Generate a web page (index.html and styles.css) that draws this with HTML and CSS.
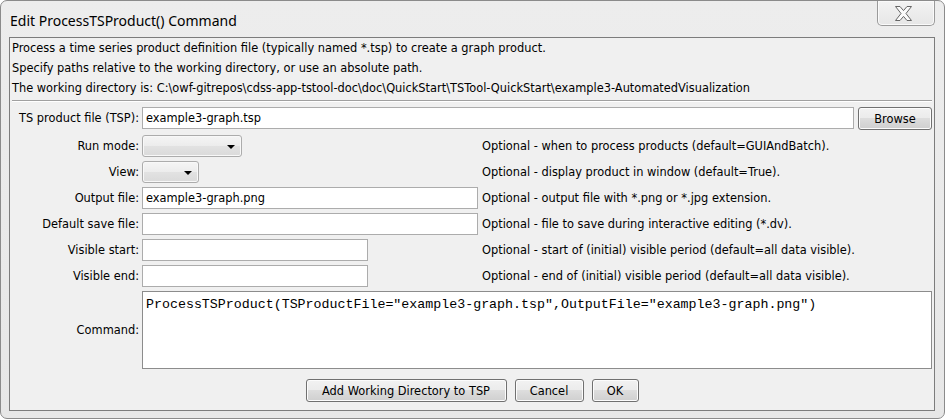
FILE: index.html
```html
<!DOCTYPE html>
<html>
<head>
<meta charset="utf-8">
<title>Edit ProcessTSProduct() Command</title>
<link rel="stylesheet" href="styles.css">
</head>
<body>
<div class="window">
  <div class="titlebar">
    <span class="title">Edit ProcessTSProduct() Command</span>
    <div class="close">
      <svg width="17" height="15" viewBox="0 0 17 15"><polygon points="0.5,0.5 5,0.5 8.5,4.6 12,0.5 16.5,0.5 11,7.5 16.5,14.5 12,14.5 8.5,10.4 5,14.5 0.5,14.5 6,7.5" fill="#fafafa" stroke="#666666" stroke-width="1" stroke-linejoin="round"/></svg>
    </div>
  </div>
  <div class="panel">
    <div class="desc">
      <p>Process a time series product definition file (typically named *.tsp) to create a graph product.</p>
      <p>Specify paths relative to the working directory, or use an absolute path.</p>
      <p>The working directory is: C:\owf-gitrepos\cdss-app-tstool-doc\doc\QuickStart\TSTool-QuickStart\example3-AutomatedVisualization</p>
    </div>
    <div class="sep"></div>
    <div class="form">
      <label class="label">TS product file (TSP):</label>
      <div class="tsprow">
        <input class="text" type="text" value="example3-graph.tsp">
        <button class="btn browse">Browse</button>
      </div>

      <label class="label">Run mode:</label>
      <div class="field"><div class="combo combo-run"><span class="arrow"></span></div></div>
      <div class="hint">Optional - when to process products (default=GUIAndBatch).</div>

      <label class="label">View:</label>
      <div class="field"><div class="combo combo-view"><span class="arrow"></span></div></div>
      <div class="hint">Optional - display product in window (default=True).</div>

      <label class="label">Output file:</label>
      <div class="field"><input class="text wide" type="text" value="example3-graph.png"></div>
      <div class="hint">Optional - output file with *.png or *.jpg extension.</div>

      <label class="label">Default save file:</label>
      <div class="field"><input class="text wide" type="text" value=""></div>
      <div class="hint">Optional - file to save during interactive editing (*.dv).</div>

      <label class="label">Visible start:</label>
      <div class="field"><input class="text short" type="text" value=""></div>
      <div class="hint">Optional - start of (initial) visible period (default=all data visible).</div>

      <label class="label">Visible end:</label>
      <div class="field"><input class="text short" type="text" value=""></div>
      <div class="hint">Optional - end of (initial) visible period (default=all data visible).</div>

      <label class="label label-cmd">Command:</label>
      <div class="command">ProcessTSProduct(TSProductFile="example3-graph.tsp",OutputFile="example3-graph.png")</div>
    </div>
    <div class="buttons">
      <button class="btn btn-add">Add Working Directory to TSP</button>
      <button class="btn btn-cancel">Cancel</button>
      <button class="btn btn-ok">OK</button>
    </div>
  </div>
</div>
</body>
</html>
```
FILE: styles.css
```css
* { box-sizing: border-box; }
html, body { margin: 0; padding: 0; }
body {
  width: 945px;
  height: 419px;
  overflow: hidden;
  background: #ffffff;
  font-family: "DejaVu Sans", sans-serif;
  font-size: 11.4px;
  color: #000;
}
.window {
  width: 945px;
  height: 419px;
  border: 1px solid #8b8b8b;
  border-radius: 7px;
  background: linear-gradient(#ededed, #e7e7e7);
  padding: 0 9px 7px 8px;
  display: flex;
  flex-direction: column;
}
.titlebar {
  height: 36px;
  flex: none;
  display: flex;
  justify-content: space-between;
  align-items: flex-start;
}
.title {
  font-family: "Noto Sans", "Open Sans", sans-serif;
  font-size: 14px;
  line-height: 20px;
  margin: 10px 0 0 1px;
  white-space: nowrap;
}
.close {
  width: 58px;
  height: 25px;
  border: 1px solid #9a9a9a;
  border-top: none;
  border-radius: 0 0 5px 5px;
  background: linear-gradient(#f3f3f3, #e6e6e6);
  box-shadow: inset 0 0 0 1px #fafafa;
  display: flex;
  align-items: center;
  justify-content: center;
  padding-right: 6px;
}
.close svg { display: block; }
.panel {
  flex: 1;
  border: 1px solid #7c7c7c;
  background: #f0f0f0;
  padding: 0 2px;
  display: flex;
  flex-direction: column;
}
.desc p {
  margin: 0;
  line-height: 20px;
  white-space: nowrap;
}
.sep {
  margin-top: 2px;
  border-top: 1px solid #a0a0a0;
  border-bottom: 1px solid #ffffff;
}
.form {
  margin-top: 5px;
  display: grid;
  grid-template-columns: 127px 336px 1fr;
  grid-template-rows: 24px repeat(6, 22px) 78px;
  column-gap: 3px;
  row-gap: 4px;
}
.label {
  text-align: right;
  line-height: 22px;
  white-space: nowrap;
  align-self: start;
}
.label-cmd { align-self: center; }
.tsprow {
  grid-column: 2 / 4;
  display: flex;
  gap: 4px;
  align-items: flex-start;
}
.tsprow .text { flex: 1; }
.field { display: flex; align-items: flex-start; }
.hint {
  line-height: 22px;
  padding-left: 1px;
  white-space: nowrap;
}
.text {
  height: 22px;
  border: 1px solid #acacac;
  background: #ffffff;
  padding: 0 3px;
  margin: 0;
  font: inherit;
  color: #000;
  outline: none;
}
.text.wide { width: 336px; }
.text.short { width: 226px; }
.combo {
  height: 22px;
  border: 1px solid #acacac;
  border-radius: 3px;
  background: linear-gradient(#f5f5f5, #ececec 50%, #e2e2e2 50%, #dadada);
  box-shadow: inset 0 0 0 1px #f8f8f8;
  display: flex;
  align-items: center;
  justify-content: flex-end;
  padding-right: 6px;
}
.combo-run { width: 100px; }
.combo-view { width: 57px; }
.arrow {
  width: 0;
  height: 0;
  border-top: 4px solid #000;
  border-left: 4px solid transparent;
  border-right: 4px solid transparent;
  margin-top: 1px;
}
.command {
  grid-column: 2 / 4;
  border: 1px solid #8c8c8c;
  background: #ffffff;
  padding: 5px 3px;
  font-family: "Liberation Mono", "Courier New", monospace;
  font-size: 13.3px;
  line-height: 16px;
  white-space: nowrap;
  overflow: hidden;
}
.btn {
  height: 23px;
  margin: 0;
  padding: 0;
  border: 1px solid #707070;
  border-radius: 3px;
  background: linear-gradient(#f2f2f2, #ebebeb 50%, #dddddd 50%, #cfcfcf);
  box-shadow: inset 0 0 0 1px #fcfcfc;
  font: inherit;
  color: #000;
  text-align: center;
}
.browse { width: 74px; flex: none; }
.buttons {
  margin-top: 10px;
  display: flex;
  justify-content: center;
  gap: 8px;
}
.btn-add { width: 201px; }
.btn-cancel { width: 69px; }
.btn-ok { width: 47px; }
```
